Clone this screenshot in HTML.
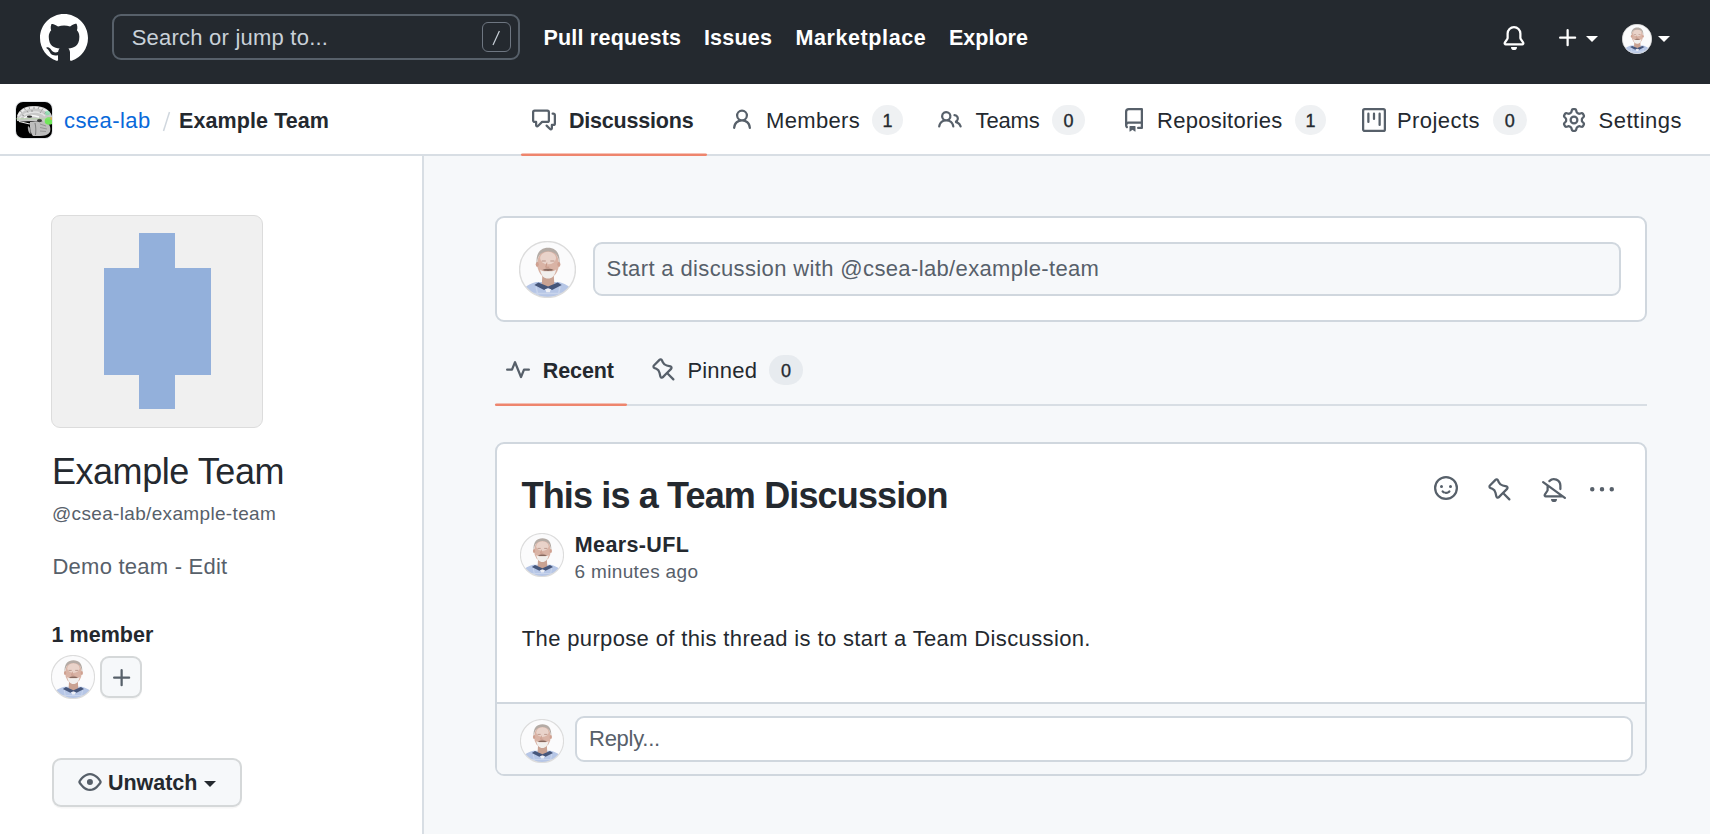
<!DOCTYPE html>
<html><head><meta charset="utf-8">
<style>
html,body{margin:0;padding:0;}
body{width:1710px;height:834px;overflow:hidden;position:relative;background:#fff;font-family:"Liberation Sans",sans-serif;color:#24292f;}
.a{position:absolute;}
.t{position:absolute;white-space:nowrap;line-height:1;}
.f21{font-size:21px;}
.f18{font-size:18px;}
.f36{font-size:36px;}
.b{font-weight:bold;}
.m{color:#57606a;}
svg.i{position:absolute;overflow:visible;}
svg.i path{fill-rule:evenodd;}
.cnt{position:absolute;height:30px;border-radius:15px;background:rgba(175,184,193,.2);font-size:18px;line-height:33px;text-align:center;color:#24292f;-webkit-text-stroke:.35px #24292f;}
</style></head><body>

<!-- HEADER -->
<div class="a" style="left:0;top:0;width:1710px;height:84px;background:#24292f;"></div>
<svg class="i" style="left:40px;top:14px" width="48" height="48" viewBox="0 0 16 16"><path fill="#fff" d="M8 0C3.58 0 0 3.580 0 8c0 3.540 2.290 6.530 5.470 7.590.4.07.55-.17.55-.38 0-.19-.01-.82-.01-1.490-2.010.37-2.530-.49-2.690-.94-.09-.23-.48-.94-.82-1.130-.28-.15-.68-.52-.01-.53.63-.01 1.080.58 1.230.82.72 1.210 1.870.87 2.330.66.07-.52.28-.87.51-1.070-1.780-.2-3.640-.89-3.640-3.950 0-.87.31-1.590.82-2.150-.08-.2-.36-1.020.08-2.120 0 0 .67-.21 2.200.82.64-.18 1.320-.27 2-.27.68 0 1.360.09 2 .27 1.530-1.040 2.200-.82 2.200-.82.44 1.100.16 1.920.08 2.120.51.56.82 1.270.82 2.150 0 3.070-1.870 3.750-3.650 3.950.29.25.54.73.54 1.480 0 1.070-.01 1.930-.01 2.200 0 .21.15.46.55.38A8.013 8.013 0 0016 8c0-4.420-3.580-8-8-8z"/></svg>
<div class="a" style="left:112px;top:14px;width:404px;height:42px;border:2px solid #57606a;border-radius:9px;"></div>
<div class="a" style="left:482px;top:22px;width:26.5px;height:28px;border:1px solid #6e7681;border-radius:6px;"></div>
<svg class="i" style="left:482px;top:22px" width="28" height="30"><line x1="17.4" y1="9" x2="11" y2="23" stroke="#c9d1d9" stroke-width="1.2"/></svg>

<!-- bell -->
<svg class="i" style="left:1502px;top:26px" width="24" height="24" viewBox="0 0 16 16"><path fill="#fff" d="M8 16a2 2 0 001.985-1.75c.017-.137-.097-.25-.235-.25h-3.5c-.138 0-.252.113-.235.25A2 2 0 008 16z"/><path fill="#fff" d="M3 5a5 5 0 0110 0v2.947c0 .05.015.098.042.139l1.703 2.555A1.518 1.518 0 0113.482 13H2.518a1.518 1.518 0 01-1.263-2.360l1.703-2.554A.25.25 0 003 7.947V5zm5-3.5A3.5 3.5 0 004.5 5v2.947c0 .346-.102.683-.294.970l-1.703 2.556a.018.018 0 00-.003.01l.001.006c0 .002.002.004.004.006a.017.017 0 00.006.004l.007.001h10.964l.007-.001a.016.016 0 00.006-.004.016.016 0 00.004-.006l.001-.007a.017.017 0 00-.003-.01l-1.703-2.554a1.75 1.75 0 01-.294-.970V5A3.5 3.5 0 008 1.5z"/></svg>
<!-- plus + caret -->
<svg class="i" style="left:1556px;top:26px" width="24" height="24" viewBox="0 0 16 16"><path fill="#fff" d="M7.75 2a.75.75 0 01.75.75V7h4.25a.75.75 0 010 1.5H8.5v4.25a.75.75 0 01-1.5 0V8.5H2.75a.75.75 0 010-1.5H7V2.75A.75.75 0 017.75 2z"/></svg>
<svg class="i" style="left:1586px;top:36px" width="12" height="6" viewBox="0 0 12 6"><path fill="#fff" d="M0 0h12L6 6z"/></svg>
<!-- avatar -->
<svg class="i" style="left:1622px;top:24px" width="30" height="30"><use href="#av"/></svg>
<svg class="i" style="left:1658px;top:36px" width="12" height="6" viewBox="0 0 12 6"><path fill="#fff" d="M0 0h12L6 6z"/></svg>

<!-- SUBHEADER -->
<div class="a" style="left:0;top:154px;width:1710px;height:2px;background:#d8dee4;"></div>
<div class="a" style="left:16px;top:102px;width:36px;height:36px;border-radius:7px;overflow:hidden;background:#000;box-shadow:0 0 0 1px #e4e7ea;">
<svg width="36" height="36" viewBox="0 0 36 36" style="display:block">
<path d="M1 19 C0 10 6 4 18 4 C28 4 34 8 36 14 L36 22 C32 21 28 20 22 19 C14 19 8 20 1 19 Z" fill="#c8c8c8"/>
<path d="M14 20 C18 19 24 19 30 20 C34 22 35 26 34 30 C32 33 28 34 24 34 L17 34 C15 32 14 28 14 24 Z" fill="#bdbdbd"/>
<path d="M12 24 C14 25 15 28 14.5 32 C12.5 31 11.5 27 12 24Z" fill="#aaa"/>
<path d="M2 14 C5 8 11 5.5 18 5.5 C25 5.5 30 8 33 11" stroke="#ececec" stroke-width="1.8" fill="none"/>
<path d="M3 17 C7 12 13 10 19 10 C24 10 27 12 29 14" stroke="#e4e4e4" stroke-width="1.6" fill="none"/>
<path d="M4 9 l2 1.5 M8 6 l1.5 2 M13 4.5 l.5 2.5 M18 4.5 v2.5 M23 5 l-1 2 M27 6.5 l-1.5 2 M6 13 l2 .5 M11 9 l1 1.5 M16 8 l0 2 M25 9.5 l-1 1.5 M30 10 l-1.5 1.5" stroke="#7a7a7a" stroke-width=".7"/>
<path d="M8 16 C12 13 18 13 23 15" stroke="#f8f8f8" stroke-width="1.4" fill="none"/>
<ellipse cx="13.5" cy="14.6" rx="2.6" ry="1.2" fill="#2e2e2e"/>
<ellipse cx="23.5" cy="18.5" rx="2.4" ry="1.7" fill="#3a3a3a"/>
<path d="M3 19.5 C7 20.5 10 21 14 22" stroke="#e8e8e8" stroke-width="1.2" fill="none"/>
<path d="M19 21 C20 25 20 29 19.5 33" stroke="#777" stroke-width=".9" fill="none"/>
<path d="M24 22 l6 2 M24 25.5 l7 1.5 M24 29 l6 .5" stroke="#8a8a8a" stroke-width=".8"/>
<ellipse cx="33" cy="19" rx="4.3" ry="3.8" fill="#70e65a"/>
<ellipse cx="31.5" cy="11" rx="2.5" ry="2.3" fill="#7ee0a8" opacity=".7"/>
<circle cx="35.3" cy="16.6" r="1.3" fill="#e8a040"/>
<line x1="0" y1="16.8" x2="36" y2="16.8" stroke="#a8dc90" stroke-width=".5"/>
</svg></div>
<svg class="i" style="left:160px;top:110px" width="12" height="24"><line x1="9.5" y1="2" x2="3.5" y2="21" stroke="#d0d7de" stroke-width="1.5"/></svg>

<!-- tabs -->
<svg class="i" style="left:532px;top:107.5px" width="24" height="24" viewBox="0 0 16 16"><path fill="#57606a" d="M1.5 2.75a.25.25 0 01.25-.25h8.5a.25.25 0 01.25.25v5.5a.25.25 0 01-.25.25h-3.5a.75.75 0 00-.53.22L3.5 11.44V9.25a.75.75 0 00-.75-.75h-1a.25.25 0 01-.25-.25v-5.5zM1.75 1A1.75 1.75 0 000 2.75v5.5C0 9.216.784 10 1.75 10H2v1.543a1.457 1.457 0 002.487 1.030L7.061 10h3.189A1.75 1.75 0 0012 8.25v-5.5A1.75 1.75 0 0010.25 1h-8.5zM14.5 4.75a.25.25 0 00-.25-.25h-.5a.75.75 0 110-1.5h.5c.966 0 1.75.784 1.75 1.75v5.5A1.75 1.75 0 0114.25 12H14v1.543a1.457 1.457 0 01-2.487 1.030L9.22 12.28a.75.75 0 111.060-1.060l2.220 2.220v-2.190a.75.75 0 01.75-.75h1a.25.25 0 00.25-.25v-5.5z"/></svg>
<div class="a" style="left:521px;top:153px;width:186px;height:3px;background:linear-gradient(rgba(238,133,109,.5) 0 1px,#ee856d 1px);border-radius:2px;"></div>

<svg class="i" style="left:730px;top:107.5px" width="24" height="24" viewBox="0 0 16 16"><path fill="#57606a" d="M10.5 5a2.5 2.5 0 11-5 0 2.5 2.5 0 015 0zm.061 3.073a4 4 0 10-5.123 0 6.004 6.004 0 00-3.431 5.142.75.75 0 001.498.07 4.5 4.5 0 018.990 0 .75.75 0 101.498-.07 6.005 6.005 0 00-3.432-5.142z"/></svg>
<div class="cnt" style="left:872px;top:105px;width:31px">1</div>

<svg class="i" style="left:938px;top:107.5px" width="24" height="24" viewBox="0 0 16 16"><path fill="#57606a" d="M5.5 3.5a2 2 0 100 4 2 2 0 000-4zM2 5.5a3.5 3.5 0 115.898 2.549 5.507 5.507 0 013.034 4.084.75.75 0 11-1.482.235 4.001 4.001 0 00-7.9 0 .75.75 0 01-1.482-.236A5.507 5.507 0 013.102 8.05 3.49 3.49 0 012 5.5zM11 4a.75.75 0 100 1.5 1.5 1.5 0 01.666 2.844.75.75 0 00-.416.672v.352a.75.75 0 00.574.73c1.2.289 2.162 1.2 2.522 2.372a.75.75 0 101.434-.44 5.01 5.01 0 00-2.56-3.012A3 3 0 0011 4z"/></svg>
<div class="cnt" style="left:1052px;top:105px;width:33px">0</div>

<svg class="i" style="left:1122px;top:107.5px" width="24" height="24" viewBox="0 0 16 16"><path fill="#57606a" d="M2 2.5A2.5 2.5 0 014.5 0h8.75a.75.75 0 01.75.75v12.5a.75.75 0 01-.75.75h-2.5a.75.75 0 110-1.5h1.75v-2h-8a1 1 0 00-.714 1.700.75.75 0 01-1.072 1.050A2.495 2.495 0 012 11.5v-9zm10.5-1V9h-8c-.356 0-.694.074-1 .208V2.5a1 1 0 011-1h8zM5 12.25v3.25a.25.25 0 00.4.2l1.450-1.087a.25.25 0 01.3 0L8.6 15.7a.25.25 0 00.4-.2v-3.25a.25.25 0 00-.25-.25h-3.5a.25.25 0 00-.25.25z"/></svg>
<div class="cnt" style="left:1295px;top:105px;width:31px">1</div>

<svg class="i" style="left:1362px;top:107.5px" width="24" height="24" viewBox="0 0 16 16"><path fill="#57606a" d="M1.75 0A1.75 1.75 0 000 1.75v12.5C0 15.216.784 16 1.75 16h12.5A1.75 1.75 0 0016 14.25V1.75A1.75 1.75 0 0014.25 0H1.75zM1.5 1.75a.25.25 0 01.25-.25h12.5a.25.25 0 01.25.25v12.5a.25.25 0 01-.25.25H1.75a.25.25 0 01-.25-.25V1.75zM11.75 3a.75.75 0 00-.75.75v7.5a.75.75 0 001.5 0v-7.5a.75.75 0 00-.75-.75zm-8.25.75a.75.75 0 011.5 0v5.5a.75.75 0 01-1.5 0v-5.5zM8 3a.75.75 0 00-.75.75v3.5a.75.75 0 001.5 0v-3.5A.75.75 0 008 3z"/></svg>
<div class="cnt" style="left:1493px;top:105px;width:33.5px">0</div>

<svg class="i" style="left:1562px;top:107.5px" width="24" height="24" viewBox="0 0 16 16"><path fill="#57606a" fill-rule="evenodd" d="M7.429 1.525a6.593 6.593 0 011.142 0c.036.003.108.036.137.146l.289 1.105c.147.56.55.967.997 1.189.174.086.341.183.501.29.417.278.97.423 1.530.27l1.102-.303c.11-.03.175.016.195.046.219.31.41.641.573.989.014.031.022.11-.059.19l-.815.806c-.411.406-.562.957-.53 1.456a4.588 4.588 0 010 .582c-.032.499.119 1.050.53 1.456l.815.806c.08.08.073.159.059.19a6.494 6.494 0 01-.573.99c-.02.029-.086.074-.195.045l-1.103-.303c-.559-.153-1.112-.008-1.529.27-.16.107-.327.204-.5.29-.449.222-.851.628-.998 1.189l-.289 1.105c-.029.11-.101.143-.137.146a6.613 6.613 0 01-1.142 0c-.036-.003-.108-.037-.137-.146l-.289-1.105c-.147-.56-.55-.967-.997-1.189a4.502 4.502 0 01-.501-.29c-.417-.278-.97-.423-1.530-.27l-1.102.303c-.11.03-.175-.016-.195-.046a6.492 6.492 0 01-.573-.989c-.014-.031-.022-.11.059-.19l.815-.806c.411-.406.562-.957.53-1.456a4.587 4.587 0 010-.582c.032-.499-.119-1.050-.53-1.456l-.815-.806c-.08-.08-.073-.159-.059-.19a6.44 6.44 0 01.573-.99c.02-.029.086-.075.195-.045l1.103.303c.559.153 1.112.008 1.529-.27.16-.107.327-.204.5-.29.449-.222.851-.628.998-1.189l.289-1.105c.029-.11.101-.143.137-.146zM8 0c-.236 0-.47.01-.701.03-.743.065-1.290.615-1.458 1.261l-.29 1.106c-.017.066-.078.158-.211.224a5.994 5.994 0 00-.668.386c-.123.082-.233.09-.3.071L3.270 2.776c-.644-.177-1.392.02-1.820.63a7.977 7.977 0 00-.704 1.217c-.315.675-.111 1.422.363 1.891l.815.806c.05.048.098.147.088.294a6.084 6.084 0 000 .772c.01.147-.038.246-.088.294l-.815.806c-.474.469-.678 1.216-.363 1.891.2.428.436.835.704 1.218.428.609 1.176.806 1.820.63l1.103-.303c.066-.019.176-.011.299.071.213.143.436.272.668.386.133.066.194.158.212.224l.289 1.106c.169.646.715 1.196 1.458 1.260a8.094 8.094 0 001.402 0c.743-.064 1.290-.614 1.458-1.260l.29-1.106c.017-.066.078-.158.211-.224a5.98 5.98 0 00.668-.386c.123-.082.233-.09.3-.071l1.102.302c.644.177 1.392-.02 1.820-.63.268-.382.505-.789.704-1.217.315-.675.111-1.422-.364-1.891l-.814-.806c-.05-.048-.098-.147-.088-.294a6.1 6.1 0 000-.772c-.01-.147.039-.246.088-.294l.814-.806c.475-.469.679-1.216.364-1.891a7.992 7.992 0 00-.704-1.218c-.428-.609-1.176-.806-1.820-.63l-1.103.303c-.066.019-.176.011-.299-.071a5.991 5.991 0 00-.668-.386c-.133-.066-.194-.158-.212-.224L10.160 1.290C9.990.645 9.444.095 8.701.031A8.094 8.094 0 008 0zm1.5 8a1.5 1.5 0 11-3 0 1.5 1.5 0 013 0zM11 8a3 3 0 11-6 0 3 3 0 016 0z"/></svg>

<!-- SIDEBAR + MAIN BG -->
<div class="a" style="left:422px;top:156px;width:2px;height:678px;background:#d8dee4;"></div>
<div class="a" style="left:424px;top:156px;width:1286px;height:678px;background:#f6f8fa;"></div>


<!-- avatar symbol -->
<svg width="0" height="0" style="position:absolute">
<defs>
<symbol id="av" viewBox="0 0 100 100">
<clipPath id="avc"><circle cx="50" cy="50" r="49"/></clipPath>
<g clip-path="url(#avc)">
<rect width="100" height="100" fill="#fbfbfc"/>
<path d="M0 100 C4 84 14 76 30 72 L70 72 C86 76 96 84 100 100 Z" fill="#b6c6e6"/>
<path d="M16 84 L24 100 M30 80 L34 100 M72 80 L68 100 M84 84 L78 100 M6 92 L94 92" stroke="#c8d4ec" stroke-width="2.5"/>
<path d="M41 60 L61 60 L62 76 L51 83 L40 76 Z" fill="#c9a292"/>
<path d="M27 77 L44 86 L51 82 L58 86 L75 77 L68 73 L51 80 L34 73 Z" fill="#46567a"/>
<path d="M46 84 L56 84 L54 90 L48 90 Z" fill="#eef0f6"/>
<ellipse cx="51" cy="40" rx="19" ry="25" fill="#d9b3a5"/>
<ellipse cx="51" cy="30" rx="14" ry="11" fill="#e9d3ca"/>
<ellipse cx="32" cy="41" rx="2.6" ry="4.5" fill="#cfa090"/>
<ellipse cx="70" cy="41" rx="2.6" ry="4.5" fill="#cfa090"/>
<path d="M31 40 C29 20 39 12 51 12 C63 12 73 20 71 40 C69 26 65 19 51 18 C37 19 33 26 31 40 Z" fill="#b4aba5"/>
<path d="M37 50 C39 61 44 66 51 66 C58 66 63 61 65 50 C60 54 56 53 51 53 C46 53 42 54 37 50 Z" fill="#f1efed"/>
<path d="M41 51 C45 48 57 48 61 51 C57 53 45 53 41 51 Z" fill="#86685e"/>
<path d="M40 35 h7 M55 35 h7" stroke="#b89488" stroke-width="2"/>
<path d="M49 38 L47 46 L53 46" stroke="#c39383" stroke-width="1.5" fill="none"/>
</g>
<circle cx="50" cy="50" r="49" fill="none" stroke="#dcdcdc" stroke-width="2.5"/>
</symbol>
</defs></svg>

<!-- SIDEBAR -->
<div class="a" style="left:51px;top:215px;width:210px;height:211px;background:#f0f0f0;border:1px solid #dcdcdc;border-radius:9px;"></div>
<div class="a" style="left:139.3px;top:233px;width:36px;height:36px;background:#93b0db"></div>
<div class="a" style="left:104px;top:268px;width:106.5px;height:106.5px;background:#93b0db"></div>
<div class="a" style="left:139.3px;top:374px;width:36px;height:35px;background:#93b0db"></div>

<svg class="i" style="left:51px;top:655px" width="44" height="44"><use href="#av"/></svg>
<div class="a" style="left:100px;top:656px;width:38px;height:38px;background:#f6f8fa;border:2px solid rgba(27,31,36,.15);border-radius:9px;box-shadow:0 1.5px 0 rgba(27,31,36,.04)"></div>
<svg class="i" style="left:110px;top:666px" width="24" height="24" viewBox="0 0 16 16"><path fill="#57606a" d="M7.75 2a.75.75 0 01.75.75V7h4.25a.75.75 0 010 1.5H8.5v4.25a.75.75 0 01-1.5 0V8.5H2.75a.75.75 0 010-1.5H7V2.75A.75.75 0 017.75 2z"/></svg>

<div class="a" style="left:52px;top:758px;width:186px;height:45px;background:#f6f8fa;border:2px solid rgba(27,31,36,.15);border-radius:9px;box-shadow:0 1.5px 0 rgba(27,31,36,.04)"></div>
<svg class="i" style="left:78px;top:770px" width="24" height="24" viewBox="0 0 16 16"><path fill="#57606a" d="M8 2c1.981 0 3.671.992 4.933 2.078 1.270 1.091 2.187 2.345 2.637 3.023a1.62 1.62 0 010 1.798c-.45.678-1.367 1.932-2.637 3.023C11.670 13.008 9.981 14 8 14c-1.981 0-3.671-.992-4.933-2.078C1.797 10.830.88 9.576.43 8.898a1.62 1.62 0 010-1.798c.45-.677 1.367-1.931 2.637-3.022C4.330 2.992 6.019 2 8 2zM1.679 7.932a.12.12 0 000 .136c.411.622 1.241 1.750 2.366 2.717C5.176 11.758 6.527 12.5 8 12.5c1.473 0 2.825-.742 3.955-1.715 1.124-.967 1.954-2.096 2.366-2.717a.12.12 0 000-.136c-.412-.621-1.242-1.750-2.366-2.717C10.824 4.242 9.473 3.5 8 3.5c-1.473 0-2.825.742-3.955 1.715-1.124.967-1.954 2.096-2.366 2.717zM8 10a2 2 0 11-.001-3.999A2 2 0 018 10z"/></svg>
<svg class="i" style="left:204px;top:781px" width="12" height="6" viewBox="0 0 12 6"><path fill="#24292f" d="M0 0h12L6 6z"/></svg>

<!-- MAIN -->
<div class="a" style="left:495px;top:216px;width:1148px;height:102px;background:#fff;border:2px solid #d0d7de;border-radius:9px;"></div>
<svg class="i" style="left:519px;top:241px" width="57" height="57"><use href="#av"/></svg>
<div class="a" style="left:593px;top:242px;width:1024px;height:50px;background:#f6f8fa;border:2px solid #d0d7de;border-radius:9px;"></div>

<div class="a" style="left:495px;top:404px;width:1152px;height:2px;background:#d8dee4;"></div>
<div class="a" style="left:495px;top:403px;width:132px;height:3px;background:linear-gradient(rgba(238,133,109,.5) 0 1px,#ee856d 1px);border-radius:2px;"></div>
<svg class="i" style="left:506px;top:358px" width="24" height="24" viewBox="0 0 16 16"><path fill="#57606a" d="M6 2c.306 0 .582.187.696.471L10 10.731l1.304-3.260A.751.751 0 0112 7h3.25a.75.75 0 010 1.5h-2.742l-1.812 4.528a.751.751 0 01-1.392 0L6 4.770 4.696 8.030A.75.75 0 014 8.5H.75a.75.75 0 010-1.5h2.742l1.812-4.529A.751.751 0 016 2z"/></svg>
<svg class="i" style="left:652px;top:358px" width="24" height="24" viewBox="0 0 16 16"><path fill="#57606a" d="M4.456.734a1.75 1.75 0 012.826.504l.613 1.327a3.081 3.081 0 002.084 1.707l2.454.584c1.332.317 1.800 1.972.832 2.940L11.060 10l3.720 3.720a.75.75 0 11-1.061 1.060L10 11.060l-2.204 2.205c-.968.968-2.623.5-2.940-.832l-.584-2.454a3.081 3.081 0 00-1.707-2.084l-1.327-.613a1.75 1.75 0 01-.504-2.826L4.456.734zM5.920 1.866a.25.25 0 00-.404-.072L1.794 5.516a.25.25 0 00.072.404l1.328.613A4.582 4.582 0 015.730 9.630l.584 2.454a.25.25 0 00.420.12l5.470-5.470a.25.25 0 00-.12-.420L9.630 5.730a4.581 4.581 0 01-3.098-2.537L5.920 1.866z"/></svg>
<div class="cnt" style="left:769px;top:355px;width:34px">0</div>

<div class="a" style="left:495px;top:442px;width:1148px;height:330px;background:#fff;border:2px solid #d0d7de;border-radius:9px;overflow:hidden;">
  <div class="a" style="left:0;top:258px;width:1148px;height:72px;background:#f6f8fa;border-top:2px solid #d0d7de;"></div>
</div>
<svg class="i" style="left:1434px;top:476px" width="24" height="24" viewBox="0 0 16 16"><path fill="#57606a" d="M8 0a8 8 0 110 16A8 8 0 018 0zM1.5 8a6.5 6.5 0 1013 0 6.5 6.5 0 00-13 0zm3.820 1.636a.75.75 0 011.038.175l.007.009c.103.118.22.222.35.31.264.178.683.37 1.285.37.602 0 1.020-.192 1.285-.371.13-.088.247-.192.35-.31l.007-.008a.75.75 0 011.222.870l-.614-.431c.614.43.614.431.613.431v.001l-.001.002-.002.003-.005.007-.014.019a2.066 2.066 0 01-.184.213c-.16.166-.338.316-.53.445-.63.418-1.370.638-2.127.629-.946 0-1.652-.308-2.126-.63a3.331 3.331 0 01-.715-.657l-.014-.02-.005-.006-.002-.003v-.002h-.001l.613-.432-.614.43a.75.75 0 01.183-1.044h.001zM12 7a1 1 0 11-2 0 1 1 0 012 0zM5 8a1 1 0 100-2 1 1 0 000 2z"/></svg>
<svg class="i" style="left:1488px;top:478px" width="24" height="24" viewBox="0 0 16 16"><path fill="#57606a" d="M4.456.734a1.75 1.75 0 012.826.504l.613 1.327a3.081 3.081 0 002.084 1.707l2.454.584c1.332.317 1.800 1.972.832 2.940L11.060 10l3.720 3.720a.75.75 0 11-1.061 1.060L10 11.060l-2.204 2.205c-.968.968-2.623.5-2.940-.832l-.584-2.454a3.081 3.081 0 00-1.707-2.084l-1.327-.613a1.75 1.75 0 01-.504-2.826L4.456.734zM5.920 1.866a.25.25 0 00-.404-.072L1.794 5.516a.25.25 0 00.072.404l1.328.613A4.582 4.582 0 015.730 9.630l.584 2.454a.25.25 0 00.420.12l5.470-5.470a.25.25 0 00-.12-.420L9.630 5.730a4.581 4.581 0 01-3.098-2.537L5.920 1.866z"/></svg>
<svg class="i" style="left:1542px;top:478px" width="24" height="24" viewBox="0 0 16 16"><path fill="#57606a" d="M8 1.5c-.997 0-1.895.416-2.534 1.086A.75.75 0 014.380 1.550 5 5 0 0113 5v2.373a.75.75 0 01-1.5 0V5A3.5 3.5 0 008 1.5zM4.182 4.310L1.190 2.143a.75.75 0 10-.880 1.214L3 5.305v2.642a.25.25 0 01-.042.139L1.255 10.640A1.518 1.518 0 002.518 13h11.108l1.184.857a.75.75 0 10.880-1.214l-1.375-.996a1.196 1.196 0 00-.013-.01L4.198 4.321a.733.733 0 00-.016-.011zm7.373 7.190H2.518a.018.018 0 01-.017-.008.02.02 0 01-.002-.006v-.007a.017.017 0 01.003-.01l1.703-2.554a1.75 1.75 0 00.294-.970V6.391L11.555 11.5zM8 16a2 2 0 001.985-1.750c.017-.137-.097-.25-.235-.25h-3.5c-.138 0-.252.113-.235.25A2 2 0 008 16z"/></svg>
<svg class="i" style="left:1590px;top:478px" width="24" height="24" viewBox="0 0 16 16"><path fill="#57606a" d="M8 9a1.5 1.5 0 100-3 1.5 1.5 0 000 3zM1.5 9a1.5 1.5 0 100-3 1.5 1.5 0 000 3zm13 0a1.5 1.5 0 100-3 1.5 1.5 0 000 3z"/></svg>

<svg class="i" style="left:520px;top:533px" width="44" height="44"><use href="#av"/></svg>

<svg class="i" style="left:520px;top:719px" width="44" height="44"><use href="#av"/></svg>
<div class="a" style="left:575px;top:716px;width:1054px;height:42px;background:#fff;border:2px solid #d0d7de;border-radius:9px;"></div>

<!--TEXTS-->
<div class="t" style="left:131.7px;top:27.3px;font-size:22px;font-weight:400;color:#c9d1d9;letter-spacing:0.226px">Search or jump to...</div>
<div class="t" style="left:543.4px;top:28.1px;font-size:21.5px;font-weight:700;color:#ffffff;letter-spacing:0.217px">Pull requests</div>
<div class="t" style="left:703.9px;top:28.1px;font-size:21.5px;font-weight:700;color:#ffffff;letter-spacing:0.22px">Issues</div>
<div class="t" style="left:795.5px;top:28.1px;font-size:21.5px;font-weight:700;color:#ffffff;letter-spacing:0.59px">Marketplace</div>
<div class="t" style="left:949.0px;top:28.1px;font-size:21.5px;font-weight:700;color:#ffffff;letter-spacing:0.0px">Explore</div>
<div class="t" style="left:64.0px;top:110.0px;font-size:22px;font-weight:400;color:#0969da;letter-spacing:0.429px">csea-lab</div>
<div class="t" style="left:179.0px;top:111.0px;font-size:21.5px;font-weight:700;color:#24292f;letter-spacing:0.091px">Example Team</div>
<div class="t" style="left:569.0px;top:111.0px;font-size:21.5px;font-weight:700;color:#24292f;letter-spacing:-0.2px">Discussions</div>
<div class="t" style="left:766.0px;top:110.0px;font-size:22px;font-weight:400;color:#24292f;letter-spacing:0.333px">Members</div>
<div class="t" style="left:975.6px;top:110.0px;font-size:22px;font-weight:400;color:#24292f;letter-spacing:-0.15px">Teams</div>
<div class="t" style="left:1157.0px;top:110.0px;font-size:22px;font-weight:400;color:#24292f;letter-spacing:0.273px">Repositories</div>
<div class="t" style="left:1397.0px;top:110.0px;font-size:22px;font-weight:400;color:#24292f;letter-spacing:0.429px">Projects</div>
<div class="t" style="left:1598.5px;top:110.0px;font-size:22px;font-weight:400;color:#24292f;letter-spacing:0.5px">Settings</div>
<div class="t" style="left:51.9px;top:454.0px;font-size:36px;font-weight:400;color:#24292f;letter-spacing:-0.445px">Example Team</div>
<div class="t" style="left:52.0px;top:504.0px;font-size:19px;font-weight:400;color:#57606a;letter-spacing:0.333px">@csea-lab/example-team</div>
<div class="t" style="left:52.5px;top:556.0px;font-size:22px;font-weight:400;color:#57606a;letter-spacing:0.233px">Demo team - Edit</div>
<div class="t" style="left:51.6px;top:625.0px;font-size:21.5px;font-weight:700;color:#24292f;letter-spacing:0.014px">1 member</div>
<div class="t" style="left:107.9px;top:773.0px;font-size:21.5px;font-weight:700;color:#24292f;letter-spacing:-0.017px">Unwatch</div>
<div class="t" style="left:606.6px;top:257.8px;font-size:22px;font-weight:400;color:#57606a;letter-spacing:0.364px">Start a discussion with @csea-lab/example-team</div>
<div class="t" style="left:542.7px;top:360.8px;font-size:21.5px;font-weight:700;color:#24292f;letter-spacing:-0.08px">Recent</div>
<div class="t" style="left:687.4px;top:359.8px;font-size:22px;font-weight:400;color:#24292f;letter-spacing:0.2px">Pinned</div>
<div class="t" style="left:521.6px;top:477.8px;font-size:36px;font-weight:700;color:#24292f;letter-spacing:-0.858px">This is a Team Discussion</div>
<div class="t" style="left:574.8px;top:534.9px;font-size:21.5px;font-weight:700;color:#24292f;letter-spacing:0.375px">Mears-UFL</div>
<div class="t" style="left:574.4px;top:561.8px;font-size:19px;font-weight:400;color:#57606a;letter-spacing:0.358px">6 minutes ago</div>
<div class="t" style="left:521.75px;top:628.0px;font-size:22px;font-weight:400;color:#24292f;letter-spacing:0.358px">The purpose of this thread is to start a Team Discussion.</div>
<div class="t" style="left:589.0px;top:727.8px;font-size:22px;font-weight:400;color:#57606a;letter-spacing:-0.257px">Reply...</div>
<!--/TEXTS-->
</body></html>
